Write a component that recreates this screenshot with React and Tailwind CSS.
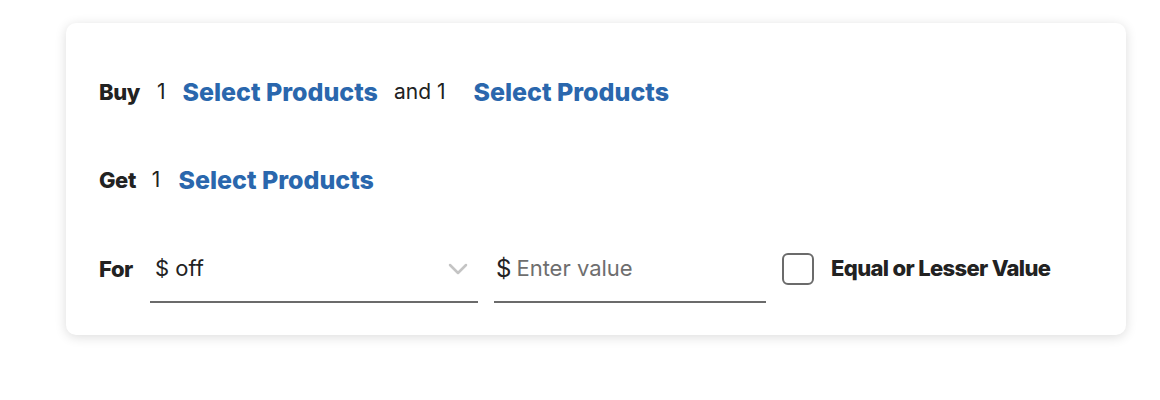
import React, { useState } from 'react';

const linkCls = "text-[#2a67ad] font-extrabold text-[25px] tracking-normal leading-none";
const labelCls = "font-extrabold text-[22px] tracking-[-0.02em]";

const App = () => {
    const [checked, setChecked] = useState(false);

    return (
        <div className="w-[1160px] h-[400px] bg-white pt-[23px] pl-[66px]" style={{ fontFamily: 'Inter, "Liberation Sans", sans-serif' }}>
            <div className="w-[1060px] h-[312px] bg-white rounded-[10px] shadow-[0_2px_12px_rgba(0,0,0,0.14)] pl-[33px] pt-[55px] text-[#222]">
                {/* Buy row */}
                <div className="flex items-center h-[28px]">
                    <span className={labelCls}>Buy</span>
                    <span className="ml-[17px] text-[21px]">1</span>
                    <button className={"ml-[17px] " + linkCls}>Select Products</button>
                    <span className="ml-[16px] text-[21px]">and 1</span>
                    <button className={"ml-[28px] " + linkCls}>Select Products</button>
                </div>

                {/* Get row */}
                <div className="flex items-center h-[28px] mt-[60px]">
                    <span className={labelCls}>Get</span>
                    <span className="ml-[16px] text-[21px]">1</span>
                    <button className={"ml-[18px] " + linkCls}>Select Products</button>
                </div>

                {/* For row */}
                <div className="flex items-start mt-[52px]">
                    <span className={labelCls + " mt-[7px] w-[51px]"}>For</span>
                    <div className="w-[328px] h-[57px] border-b-2 border-[#6b6b6b] flex items-center justify-between pl-[5px] pr-[10px] pb-[10px]">
                        <span className="text-[22px]">$ off</span>
                        <svg width="20" height="12" viewBox="0 0 20 12" fill="none">
                            <path d="M2 2l8 8 8-8" stroke="#c4c4c4" strokeWidth="2.5" strokeLinecap="round" strokeLinejoin="round" />
                        </svg>
                    </div>
                    <div className="ml-[16px] w-[272px] h-[57px] border-b-2 border-[#6b6b6b] flex items-center pl-[2px] pb-[10px]">
                        <span className="text-[24px] mr-[5px]">$</span>
                        <input
                            type="text"
                            placeholder="Enter value"
                            className="flex-1 min-w-0 outline-none text-[22px] placeholder-[#6e6e6e] bg-transparent"
                        />
                    </div>
                    <label className="ml-[16px] flex items-center mt-[6px] cursor-pointer">
                        <span
                            onClick={() => setChecked(!checked)}
                            className="w-[32px] h-[32px] rounded-[6px] border-2 border-[#6b6b6b] bg-white"
                        ></span>
                        <span className={"ml-[17px] font-extrabold text-[22px] tracking-[-0.03em]"}>Equal or Lesser Value</span>
                    </label>
                </div>
            </div>
        </div>
    );
};

export default App;
